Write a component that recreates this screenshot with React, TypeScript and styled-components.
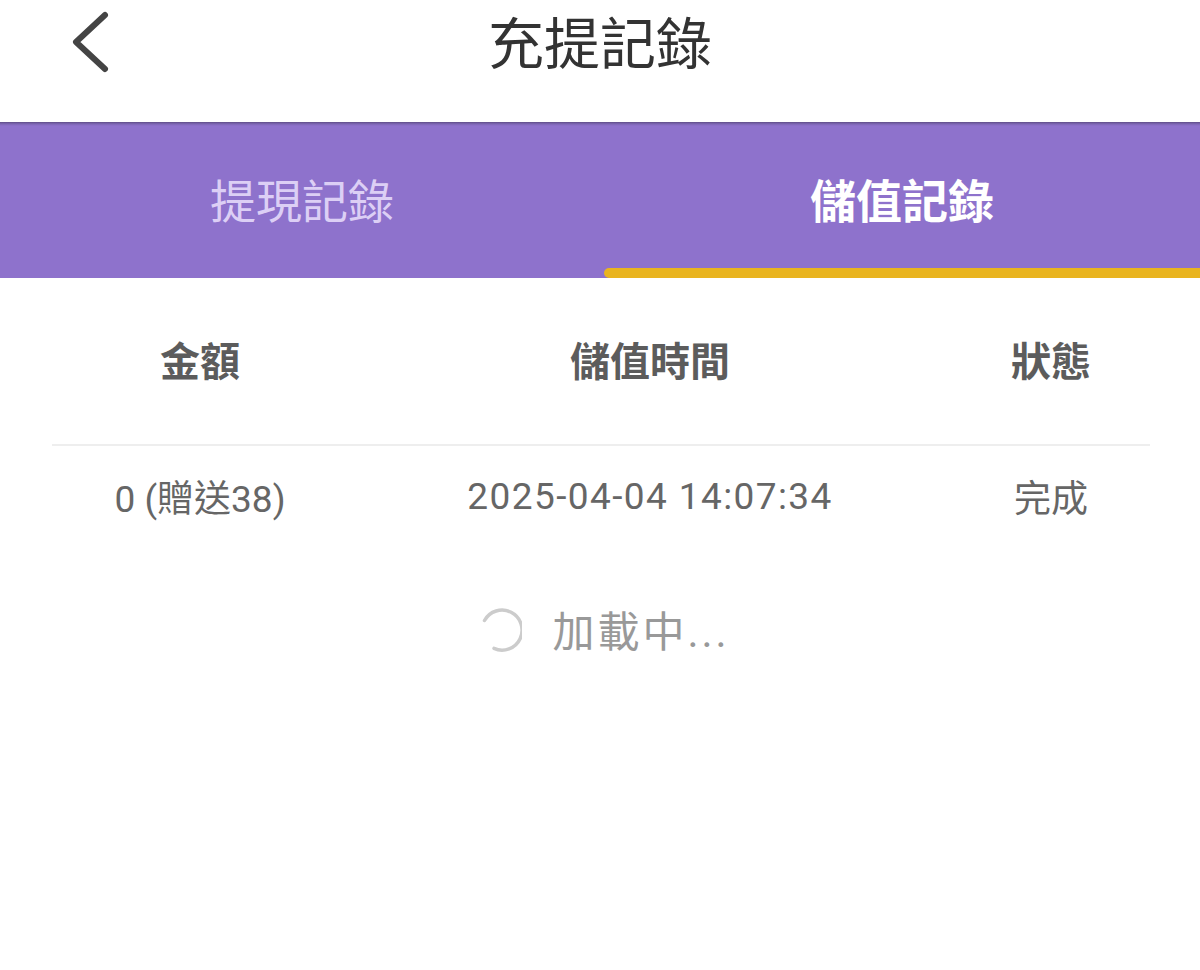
import React, { FunctionComponent } from 'react';
import styled, { createGlobalStyle } from 'styled-components';

const GlobalStyle = createGlobalStyle`
  html, body {
    margin: 0;
    padding: 0;
    background: #fff;
    font-family: Roboto, "Noto Sans CJK TC", "Noto Sans CJK SC", sans-serif;
  }
`
const Page = styled.div`
  width: 1200px;
  min-height: 970px;
  background: #fff;
`
const Header = styled.header`
  height: 122px;
  position: relative;
  display: flex;
  justify-content: center;
  align-items: flex-start;
`
const BackButton = styled.button`
  position: absolute;
  left: 66px;
  top: 8px;
  width: 50px;
  height: 70px;
  border: none;
  background: none;
  padding: 0;
  cursor: pointer;
`
const Title = styled.h1`
  margin: 0;
  padding-top: 9px;
  font-size: 56px;
  line-height: 72px;
  font-weight: 400;
  color: #333;
`
const TabBar = styled.nav`
  height: 156px;
  background: linear-gradient(#5f4d86 0, #7d66b4 2px, #8e72cc 4px);
  display: grid;
  grid-template-columns: 604px 1fr;
`
const Tab = styled.div<{ active?: boolean }>`
  position: relative;
  display: flex;
  justify-content: center;
  align-items: center;
  padding-bottom: 4px;
  font-size: 46px;
  font-weight: ${p => (p.active ? 700 : 400)};
  color: ${p => (p.active ? '#ffffff' : '#dccff5')};
  &::after {
    content: '';
    display: ${p => (p.active ? 'block' : 'none')};
    position: absolute;
    left: 0;
    right: 0;
    bottom: 0;
    height: 10px;
    border-radius: 5px 0 0 5px;
    background: #e9b41f;
  }
`
const Table = styled.section`
  margin: 0 50px 0 52px;
`
const Row = styled.div<{ head?: boolean }>`
  display: grid;
  grid-template-columns: 296px 604px 1fr;
  align-items: center;
  height: ${p => (p.head ? '166px' : '100px')};
  border-bottom: ${p => (p.head ? '2px solid #eeeeee' : 'none')};
`
const HeadCell = styled.div`
  text-align: center;
  font-size: 40px;
  font-weight: 700;
  color: #5c5c5c;
  padding-bottom: 4px;
`
const Cell = styled.div<{ spaced?: boolean }>`
  text-align: center;
  font-size: 37px;
  color: #666;
  letter-spacing: ${p => (p.spaced ? '1.4px' : '0')};
`
const Loading = styled.div`
  display: flex;
  justify-content: center;
  align-items: center;
  gap: 30px;
  margin-top: 52px;
  padding-left: 6px;
  font-size: 42px;
  letter-spacing: 3px;
  color: #999;
`

const ChevronLeft: FunctionComponent = () => (
  <svg width="50" height="70" viewBox="0 0 50 70">
    <polyline points="39,7 10,34 39,61" fill="none" stroke="#444" strokeWidth="6" strokeLinecap="round" strokeLinejoin="round" />
  </svg>
)

const Spinner: FunctionComponent = () => (
  <svg width="46" height="46" viewBox="0 0 46 46">
    <path d="M8.5 14.5 A20 20 0 1 1 18 42.4" fill="none" stroke="#cccccc" strokeWidth="3.5" strokeLinecap="round" />
  </svg>
)

const records = [{ amount: '0 (贈送38)', time: '2025-04-04 14:07:34', status: '完成' }]

const App: FunctionComponent = () => {
  return (
    <Page>
      <GlobalStyle />
      <Header>
        <BackButton aria-label="back">
          <ChevronLeft />
        </BackButton>
        <Title>充提記錄</Title>
      </Header>
      <TabBar>
        <Tab>提現記錄</Tab>
        <Tab active>儲值記錄</Tab>
      </TabBar>
      <Table>
        <Row head>
          <HeadCell>金額</HeadCell>
          <HeadCell>儲值時間</HeadCell>
          <HeadCell>狀態</HeadCell>
        </Row>
        {records.map((r, i) => (
          <Row key={i}>
            <Cell>{r.amount}</Cell>
            <Cell spaced>{r.time}</Cell>
            <Cell>{r.status}</Cell>
          </Row>
        ))}
      </Table>
      <Loading>
        <Spinner />
        <span>加載中...</span>
      </Loading>
    </Page>
  )
}

export default App;
